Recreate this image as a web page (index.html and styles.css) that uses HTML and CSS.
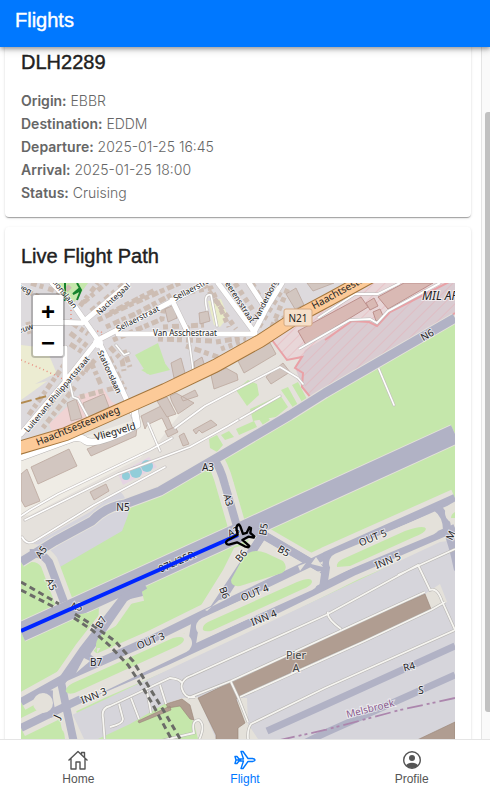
FILE: index.html
```html
<!DOCTYPE html>
<html lang="en">
<head>
<meta charset="utf-8">
<meta name="viewport" content="width=device-width, initial-scale=1">
<title>Flights</title>
<link rel="stylesheet" href="styles.css">
</head>
<body>
<header class="app-bar"><h1 class="app-title">Flights</h1></header>
<div class="view">
<main class="content">
  <section class="card card-details">
    <h2 class="card-title">DLH2289</h2>
    <ul class="details">
      <li><strong>Origin:</strong> EBBR</li>
      <li><strong>Destination:</strong> EDDM</li>
      <li><strong>Departure:</strong> 2025-01-25 16:45</li>
      <li><strong>Arrival:</strong> 2025-01-25 18:00</li>
      <li><strong>Status:</strong> Cruising</li>
    </ul>
  </section>
  <section class="card">
    <h2 class="card-title">Live Flight Path</h2>
    <div class="map">
      <svg class="map-canvas" viewBox="21 283 434 500" preserveAspectRatio="xMidYMin slice" role="img" aria-label="Map">
        <defs>
          <pattern id="hatch" width="8" height="8" patternUnits="userSpaceOnUse" patternTransform="rotate(45)"><path d="M0 0V8" stroke="#e9a5ae" stroke-width="1.5"/></pattern>
          <path id="north-taxiway" d="M455 318L325 393L290 415L222 455L160 491L125 504Q105 507 92 521L55 541L21 562"/>
          <g id="taxi-lines">
            <path d="M213 458Q220 466 225 485L238 530"/>
            <path d="M30 553Q42 552 49 562L64 602"/>
            <path d="M455 498L325 556L254 590L203 614L150 640L100 662L66 677L21 702"/>
            <path d="M455 528L355 571L325 586L264 616L165 662L100 690L66 706L21 728"/>
            <path d="M262 536L214 611L195 625L191 650"/>
            <path d="M256 531L325 571"/>
            <path d="M142 592L125 596L83 650L61 682L66 706L76 752"/>
            <path d="M83 650Q87 660 97 663"/>
            <path d="M49 690Q48 700 53 717"/>
            <path d="M436 507Q447 515 447 530Q453 545 458 570"/>
            <path d="M328 554L323 588"/>
          </g>
        </defs>
        <rect x="21" y="283" width="434" height="500" fill="#c5e7ab"/>
        <!-- ground north of the airfield -->
        <path d="M21 283H455V318L325 393L222 455L160 491L95 520L21 562Z" fill="#e5e1dc"/>
        <path d="M21 458L190 401L160 440L140 458L30 515L21 516Z" fill="#efece5"/>
        <path d="M21 283H370L300 316L260 341L160 389L21 447Z" fill="#dddadd"/>
        <path d="M21 345L46 348L57 374L35 390L21 400Z" fill="#ececd2"/>
        <path d="M208 301L221 299L228 317L220 327L214 325Z" fill="#e9ecc8"/>
        <path d="M60 378L35 384L50 376L71 370L75 405L45 432L40 418Z" fill="#dcdada"/>
        <path d="M49 424L78 396L103 388L112 402L125 408L60 430L52 432Z" fill="#f0d3d3"/>
        <g fill="#c5e7ab">
          <path d="M135 355L158 343L165 363L147 374Z"/><path d="M141 370L164 362L170 370L150 375Z"/>
          <path d="M55 283H88L73 304Z"/><path d="M236 390L248 380L257 384L259 395L247 406Z"/>
          <path d="M250 409L280 395L288 407L276 417L253 421Z"/><path d="M281 390L288 387L299 407L294 409ZM292 385L298 382L307 399L302 402Z"/>
          <path d="M209 439L217 435L223 445L217 452L210 448ZM221 435L229 431L234 437L225 440ZM236 429L254 421L257 427L239 435ZM259 419L267 416L270 420L263 425Z"/>
        </g>
        <path d="M33 544L90 512L119 490Q133 505 127 518L122 531L53 571L41 555Z" fill="#d5d4dc"/>
        <path d="M118 474L149 457L157 467L123 485Z" fill="#e5d4e3"/>
        <g fill="#91cdd9"><circle cx="126" cy="476" r="4"/><circle cx="136" cy="472" r="6"/><circle cx="147" cy="466" r="6"/></g>
        <!-- military area -->
        <path d="M272 340L320 308L345 293L364 283H455V313L311 398L303 388L295 367L302 358L287 360Z" fill="#e8d6d8"/>
        <path d="M305 350L355 320L375 323L394 306L455 279V313L311 398L303 388L295 367L302 358Z" fill="#d9cbd1"/>
        <path d="M272 340L320 308L364 283H455V313L311 398L295 367L302 358L287 360Z" fill="url(#hatch)" opacity=".5"/>
        <g fill="#d9b9b4" stroke="#bd908c"><path d="M298 331L361 297L368 307L306 345Z"/><path d="M378 297L404 283H433L388 309Z"/><path d="M366 303L374 298L378 306L370 310ZM373 312L380 309L384 318L376 321Z"/></g>
        <path d="M272 340L287 360L302 357L295 368L303 373L302 387L311 398L455 313M325 340L352 321L369 322L377 326L390 312L455 279" fill="none" stroke="#e9a1a6" stroke-width="2"/>
        <path d="M299 349L350 320L370 319L377 323L388 311L440 283M318 318L355 294L378 294L400 283" fill="none" stroke="#bbb" stroke-width="3"/><path d="M299 349L350 320L370 319L377 323L388 311L440 283M318 318L355 294L378 294L400 283" fill="none" stroke="#fff" stroke-width="2"/>
        <!-- rows of houses -->
        <g fill="none" stroke="#cdbdb3" stroke-width="5">
          <path stroke-dasharray="6 3 4 5" d="M27 291L57 306M31 283L62 293M70 286L54 303M80 306L98 283M91 311L125 283M84 302L111 279"/>
          <path stroke-dasharray="5 3 7 2" d="M98 320L134 303L180 283M113 340L162 319L164 305M106 327L135 314L171 295M110 313L155 290"/>
          <path stroke-dasharray="5 4" d="M190 292L211 288L229 327M204 284L236 329M235 283L258 318M252 283L267 309M259 327L282 290M272 327L288 288"/>
          <path stroke-dasharray="7 3 4 3" d="M109 357L125 390M72 323L88 334M70 333L87 346M70 344L84 353M110 347L122 360L124 371M91 362L101 385M75 366L90 371"/>
          <path stroke-dasharray="4 3 6 3" d="M64 365L28 416M86 355L46 410M75 387L42 429M95 360L76 380M124 350L130 367"/>
          <path stroke-dasharray="5 4 7 3" d="M158 339L215 341M216 342L246 337M163 327L204 325M80 397L114 388M186 346L218 357M26 325L61 315"/>
          <path stroke-dasharray="4 4" d="M27 332L59 323M172 300L165 307M176 314L190 331M275 322L305 308M221 349L246 340"/>
        </g>
        <g fill="#d2c6c0" stroke="#bba79d" stroke-width=".8">
          <path d="M31 467L69 449L77 466L38 484ZM21 474L27 469L40 501L25 507L21 500ZM87 449L137 427L136 436L91 456ZM90 492L106 484L109 491L94 500Z"/>
          <path d="M83 403L104 394L109 407L87 418ZM67 403L76 399L82 418L71 421Z"/><path d="M141 416L163 405L173 429L168 431L162 418L147 425L145 429Z"/>
          <path d="M237 359L270 343L276 354L244 373ZM211 375L226 368L237 374L238 380L214 389ZM266 377L283 363L290 372L271 384Z"/>
          <path d="M171 363L181 358L185 373L174 378ZM194 362L202 357L205 367L195 370ZM199 313L208 311L210 321L200 324ZM165 309L174 305L177 318L168 322Z"/>
          <path d="M165 431L175 427L178 432L168 437ZM179 436L184 433L189 444L183 446ZM193 430L211 420L217 425L202 433L199 430L196 434Z"/>
          <path d="M286 294L296 288L304 305L295 309ZM307 283H334L313 291ZM170 396L176 393L194 403L178 414L172 402ZM181 397L195 390L198 396L183 401Z"/>
          <path d="M157 401L167 397L176 414L167 417Z"/>
        </g>
        <g fill="none" stroke="#e98d7e" stroke-width="1.5" stroke-dasharray="1 3"><path d="M21 360L42 369L65 380M71 310V325"/><circle cx="99" cy="334" r="3"/></g>
        <path d="M21 403L47 396" stroke="#b28a4f" stroke-width="2" stroke-dasharray="11 4"/>
        <!-- minor roads -->
        <g fill="none" stroke-linecap="round" stroke-linejoin="round">
          <path d="M21 516L30 510L58 494L150 450L172 438M25 520L118 474L190 447L228 426L238 420M175 428L205 406L243 386L280 367L298 378L303 384M240 419L280 396M188 333L193 369M207 310Q203 293 211 295L217 326M22 537Q27 546 35 541L94 505L165 467M68 375L73 397L78 399L89 419M116 345L124 355L129 353M148 423L160 451M378 367L394 405" stroke="#c5c1bf" stroke-width="3"/>
          <path d="M21 516L30 510L58 494L150 450L172 438M25 520L118 474L190 447L228 426L238 420M175 428L205 406L243 386L280 367L298 378L303 384M240 419L280 396M188 333L193 369M207 310Q203 293 211 295L217 326M22 537Q27 546 35 541L94 505L165 467M68 375L73 397L78 399L89 419M116 345L124 355L129 353M148 423L160 451M378 367L394 405" stroke="#fff" stroke-width="1.6"/>
          <path d="M52 283L75 307L98 340L119 383L137 423M98 340L64 383L21 434M98 340L165 305L202 285M82 323L128 284M118 334L255 334M82 323L54 322M172 300L188 333M218 283L255 333M249 283L266 309L253 334M266 309L282 283M65 348V382" stroke="#c4bfbf" stroke-width="6"/>
          <path d="M52 283L75 307L98 340L119 383L137 423M98 340L64 383L21 434M98 340L165 305L202 285M82 323L128 284M118 334L255 334M82 323L54 322M172 300L188 333M218 283L255 333M249 283L266 309L253 334M266 309L282 283M65 348V382" stroke="#fff" stroke-width="5"/>
          <path d="M21 457L73 438Q81 436 86 441Q97 446 137 425L134 407" stroke="#b8b4b2" stroke-width="8"/><path d="M21 457L73 438Q81 436 86 441Q97 446 137 425L134 407" stroke="#fff" stroke-width="7"/>
          <circle cx="98" cy="343" r="5" fill="#fff"/>
        </g>
        <path d="M65 283V301M77 283L81 290L77 300M81 290L73 294L80 288" fill="none" stroke="#15822c" stroke-width="2"/>
        <path d="M12 450L66 434L165 390L215 366L260 341L300 315L330 299L370 277" fill="none" stroke="#a4763d" stroke-width="14"/>
        <path d="M12 450L66 434L165 390L215 366L260 341L300 315L330 299L370 277" fill="none" stroke="#fcca98" stroke-width="12"/>
        <!-- airfield -->
        <g fill="none" stroke="#e4e1da" stroke-linejoin="round">
          <use href="#north-taxiway" stroke-width="11"/>
          <use href="#taxi-lines" stroke-width="18"/>
          <path d="M21 632L455 434" stroke-width="21"/>
        </g>
        <path d="M455 540L440 542L325 596L72 715L86 783H455Z" fill="#d6d5db"/>
        <path d="M64 714L72 713L84 739V783H70Z" fill="#e4e1da"/>
        <path d="M234 548L264 538L297 563L290 580L205 617L195 615L223 570Z" fill="#e4e1da"/>
        <path d="M99 606L141 590L97 653Z" fill="#e4e1da"/>
        <g fill="none" stroke="#b1b2c5" stroke-linejoin="round">
          <use href="#north-taxiway" stroke-width="9"/>
          <use href="#taxi-lines" stroke-width="8"/>
          <path d="M21 632L455 434" stroke-width="19"/>
          <path d="M127 594L87 652L61 682M145 585L121 600M237 528L236 540M262 536L207 619M264 535L325 571" stroke-width="8"/>
          <path d="M455 646L325 705L267 731M455 675L325 733L300 745" stroke-width="7"/>
        </g>
        <!-- islands between taxiways -->
        <g stroke-linecap="round" fill="none" stroke="#e4e1da">
          <path d="M206 627L308 581M339 563L430 525M86 689L182 643" stroke-width="20"/>
          <path d="M455 513L462 509" stroke-width="20"/>
        </g>
        <g fill="#c5e7ab">
          <path d="M203 630Q202 625 208 622L297 582Q312 576 312 582Q311 586 303 589L211 631Q205 632 203 630Z"/>
          <path d="M337 567Q336 562 343 559L405 531Q425 524 426 529Q425 533 414 537L350 566Z"/>
          <path d="M66 692Q65 687 73 683L173 638Q184 635 184 640Q183 644 173 648L79 691Q70 696 66 692Z"/>
          <path d="M231 580L243 558Q251 547 266 553L283 561Q289 568 282 573L240 586Q231 587 231 580Z"/>
          <path d="M451 518Q451 514 455 512V518Z"/>
          <path d="M96 648Q95 640 102 634L126 620L112 648Z"/><path d="M75 615L87 613Q96 617 88 628L78 621Z"/>
        </g>
        <path d="M90 661L84 658L76 673ZM207 611L219 600L229 598L205 610ZM298 566L306 563L300 571ZM311 564L323 567L316 557ZM309 573L321 571L314 580Z" fill="#e4e1da"/>
        <circle cx="43" cy="703" r="10" fill="#e4e1da"/>
        <!-- terminal -->
        <path d="M165 704L182 698L198 697L216 739V783H157L130 739Z" fill="#e4e1da"/>
        <path d="M98 739L130 724L166 703L183 705L194 723L198 739V783H90ZM33 739L55 727Q65 728 65 739Z" fill="#c5e7ab"/>
        <path d="M238 698L247 698L248 724L262 745H236Z" fill="#e4e1da"/>
        <path d="M425 594L440 584L447 602L431 609Z" fill="#e4e1da"/>
        <path d="M198 698L231 682L325 638L360 622L425 594L431 609L365 640L325 657L240 696L236 699L245 723L238 728V783H216V735ZM166 704L182 699L190 705L194 720L190 719L180 706L168 708ZM138 721L170 706L171 710L139 723ZM415 741L455 722V741Z" fill="#b09d91" stroke="#998476" stroke-width=".6"/>
        <g fill="none">
          <path d="M195 697Q185 699 182 689Q179 680 193 675L326 615L418 565L430 590Q437 587 442 601L455 630L325 688L251 724Q246 731 249 745M188 698L231 681L425 592M240 697L365 641L431 610L445 602M231 682L239 699L248 722M105 745L103 718Q101 708 110 706L170 678Q180 679 182 683M119 704L123 719Q123 724 110 727M131 698L139 719M147 691L151 713M160 685L166 704M160 741L194 733Q191 720 199 720Q206 725 199 740M398 575L455 549M328 612Q326 618 341 629" stroke="#b9b7b4" stroke-width="3"/>
          <path d="M195 697Q185 699 182 689Q179 680 193 675L326 615L418 565L430 590Q437 587 442 601L455 630L325 688L251 724Q246 731 249 745M188 698L231 681L425 592M240 697L365 641L431 610L445 602M231 682L239 699L248 722M105 745L103 718Q101 708 110 706L170 678Q180 679 182 683M119 704L123 719Q123 724 110 727M131 698L139 719M147 691L151 713M160 685L166 704M160 741L194 733Q191 720 199 720Q206 725 199 740M398 575L455 549M328 612Q326 618 341 629" stroke="#f6f5f1" stroke-width="1.8"/>
          <path d="M21 582L59 604M75 614L91 624L115 641L133 661L149 687L162 708L182 742M21 590L54 607M74 618L92 630L110 646L128 665L142 686L153 705L173 742" stroke="#6b6b68" stroke-width="3" stroke-dasharray="6 4"/>
          <path d="M455 698L400 710L325 730L280 740" stroke="#ac86ad" stroke-width="1.8" stroke-dasharray="16 4 3 3 3 4"/>
        </g>
        <rect x="284" y="309" width="28" height="17" rx="2" fill="#f5dfc9" stroke="#d4a983"/>
        <!-- labels -->
        <g class="labels">
          <text class="shield" x="298" y="322">N21</text>
          <text class="street" transform="translate(185 336)">Van Asschestraat</text>
          <text class="street" transform="translate(139 321) rotate(-27)">Sellaerstraat</text>
          <text class="street" transform="translate(196 290) rotate(-28)">Sellaerstraat</text>
          <text class="street" transform="translate(115 301) rotate(-43)">Nachtegaal</text>
          <text class="street" transform="translate(236 301) rotate(57)">Heerensstraat</text>
          <text class="street" transform="translate(268 301) rotate(-63)">Vanderborg</text>
          <text class="street" transform="translate(107 373) rotate(65)">Stationslaan</text>
          <text class="street" transform="translate(59 291) rotate(52)">Stationslaan</text>
          <text class="street" transform="translate(59 396) rotate(-50)">Luitenant Philippartstraat</text>
          <text class="street" transform="translate(23 291) rotate(27)">weg</text>
          <text class="street" transform="translate(23 332) rotate(-18)">nieuw</text>
          <text class="main" transform="translate(79 429) rotate(-22)">Haachtsesteenweg</text>
          <text class="main" transform="translate(353 288) rotate(-29)">Haachtsesteenweg</text>
          <text class="main" transform="translate(116 435) rotate(-16)">Vliegveld</text>
          <text class="area" x="422" y="300">MIL APT</text>
          <text transform="translate(429 338) rotate(-30)">N6</text><text x="123" y="511">N5</text>
          <text x="208" y="471">A3</text><text transform="translate(225 501) rotate(74)">A3</text>
          <text transform="translate(44 554) rotate(-55)">A5</text><text transform="translate(48 586) rotate(65)">A5</text>
          <text transform="translate(267 530) rotate(-80)">B5</text><text transform="translate(282 554) rotate(30)">B5</text>
          <text transform="translate(244 558) rotate(-50)">B6</text><text transform="translate(221 594) rotate(70)">B6</text>
          <text transform="translate(104 624) rotate(-60)">B7</text><text x="96" y="666">B7</text>
          <text transform="translate(374 541) rotate(-22)">OUT 5</text><text transform="translate(389 564) rotate(-22)">INN 5</text>
          <text transform="translate(256 596) rotate(-22)">OUT 4</text><text transform="translate(265 621) rotate(-22)">INN 4</text>
          <text transform="translate(152 644) rotate(-22)">OUT 3</text><text transform="translate(95 699) rotate(-22)">INN 3</text>
          <text transform="translate(60 718) rotate(-65)">J</text><text transform="translate(454 537) rotate(-65)">M</text>
          <text transform="translate(178 565) rotate(-24)">07L/25R</text><text transform="translate(76 610) rotate(10)">A5</text><text transform="translate(235 535) rotate(-24)">A3</text>
          <text transform="translate(410 670) rotate(-15)">R4</text><text x="421" y="694">S</text>
          <text class="place" x="296" y="659">Pier</text><text class="place" x="296" y="672">A</text>
          <text class="town" transform="translate(371 712) rotate(-14)">Melsbroek</text>
        </g>
        <path d="M21 631L238 535" stroke="#0026ff" stroke-width="4"/>
        <path class="plane" transform="translate(160 420) scale(.3333)" d="M198 368Q198 362 212 356L233 344L229 324Q230 315 237 313L241 319L249 342L260 339L268 322L273 324L271 339L283 349L281 353L265 350L247 360L268 378L265 382L254 379L231 367L207 374Q199 374 198 368Z"/>
      </svg>
      <div class="zoom-control"><button type="button" aria-label="Zoom in">+</button><button type="button" aria-label="Zoom out">−</button></div>
    </div>
  </section>
</main>
<div class="scroll-track" aria-hidden="true"><div class="scroll-thumb"></div></div>
</div>
<nav class="tabs">
  <a class="tab" href="#home"><svg class="tab-icon" viewBox="0 0 22 22" aria-hidden="true"><path d="M1.500 11.500L11 2.500L20.500 11.500M4 9.500V20H9V13H13V20H18V9.500M14.500 5.500V3.500H17.500V8.500"/></svg><span>Home</span></a>
  <a class="tab tab-active" href="#flight"><svg class="tab-icon" viewBox="0 0 22 22" aria-hidden="true"><path d="M1 7.500H3L5 10H9.500L7 2.500H9L14 9.500H18.500Q21 10 21 11Q21 12 18.500 12.500H14L9 19.500H7L9.500 12H5L3 14.500H1L2 11ZM2 11H7"/></svg><span>Flight</span></a>
  <a class="tab" href="#profile"><svg class="tab-icon" viewBox="0 0 22 22" aria-hidden="true"><circle cx="11" cy="11" r="8.300"/><circle class="solid" cx="11" cy="9" r="3"/><path class="solid" d="M5 16.500Q6.500 13.800 11 13.800T17 16.500Q14.500 19 11 19T5 16.500Z"/></svg><span>Profile</span></a>
</nav>
</body>
</html>
```
FILE: styles.css
```css
* { box-sizing: border-box; }
body {
  margin: 0;
  height: 100vh;
  display: flex;
  flex-direction: column;
  overflow: hidden;
  background: #fff;
  font-family: "Liberation Sans", Arial, sans-serif;
}
.app-bar {
  position: relative;
  z-index: 2;
  padding: 7px 15px 14px;
  background: #0078ff;
  color: #fff;
  box-shadow: 0 2px 4px rgba(0, 0, 0, .3), 0 3px 8px rgba(0, 0, 0, .14);
}
.app-title, .card-title {
  margin: 0;
  font-size: 20px;
  line-height: 26px;
  font-weight: 400;
  -webkit-text-stroke: .4px currentColor;
}
.view { flex: 1; min-height: 0; display: flex; }
.content { flex: 1; min-width: 0; overflow: hidden; }
.card {
  margin: 0 10px 10px 5px;
  padding: 16px 16px 13px;
  border-radius: 4px;
  background: #fff;
  box-shadow: 0 2px 1px -1px rgba(0, 0, 0, .2), 0 1px 1px rgba(0, 0, 0, .14), 0 1px 3px rgba(0, 0, 0, .12);
}
.card-details { margin-top: -14px; }
.card-title { margin-bottom: 14px; color: #212121; }
.details {
  margin: 0;
  padding: 0;
  list-style: none;
  color: #666;
  font: 300 14px/23px Inter, sans-serif;
}
.details strong { font-weight: 600; }
.map { position: relative; }
.map-canvas { display: block; width: 100%; height: 500px; }
.labels {
  font: 10px "Noto Sans", sans-serif;
  fill: #222;
  stroke: rgba(255, 255, 255, .6);
  stroke-width: 2px;
  paint-order: stroke;
  text-anchor: middle;
}
.labels .street { font-size: 8px; }
.labels .main { stroke: none; }
.labels .area { font-size: 12px; font-style: italic; text-anchor: start; }
.labels .town { fill: #8b5d8e; }
.labels .shield { stroke: none; }
.labels .place { font-size: 11px; fill: #444; }
.plane { fill: none; stroke: #000; stroke-width: 7px; stroke-linejoin: round; }
.zoom-control {
  position: absolute;
  top: 10px;
  left: 10px;
  display: flex;
  flex-direction: column;
  border: 2px solid rgba(0, 0, 0, .2);
  border-radius: 4px;
  background-clip: padding-box;
}
.zoom-control button {
  width: 30px;
  height: 30px;
  padding: 4px 0 0;
  border: 0;
  border-radius: 0 0 2px 2px;
  background: #fff;
  color: #000;
  font: bold 24px/26px "Liberation Sans", sans-serif;
}
.zoom-control button:first-child { height: 31px; border-bottom: 1px solid #ccc; border-radius: 2px 2px 0 0; }
.scroll-track {
  width: 9px;
  padding-left: 3px;
  border-left: 1px solid #e5e5e5;
  background: #fafafa;
}
.scroll-thumb {
  position: relative;
  top: 9.4%;
  height: 86.7%;
  border-radius: 3px 0 0 3px;
  background: #c1c1c1;
}
.tabs {
  position: relative;
  display: flex;
  gap: 10px;
  border-top: 1px solid #e5e5e5;
  background: #fff;
}
.tab {
  flex: 1;
  display: flex;
  flex-direction: column;
  align-items: center;
  padding: 9px 0 6px;
  color: #555;
  font-size: 12px;
  line-height: 16px;
  text-decoration: none;
}
.tab-active { color: #0078ff; }
.tab-icon {
  width: 22px;
  height: 22px;
  fill: none;
  stroke: currentColor;
  stroke-width: 1.4px;
  stroke-linejoin: round;
}
.tab-icon .solid { fill: currentColor; stroke: none; }
```
